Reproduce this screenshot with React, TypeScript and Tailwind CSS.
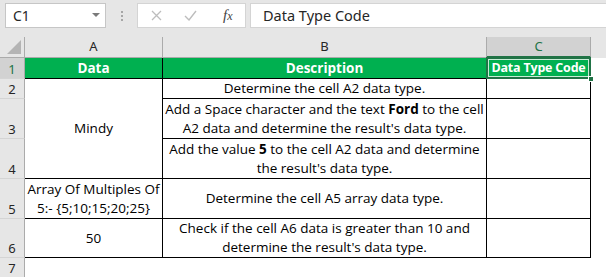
import React from "react";

const cellFont = { fontFamily: '"Open Sans", "Noto Sans", sans-serif' };

function RowHead({ n, sel }: { n: number; sel?: boolean }) {
  return (
    <div
      className={
        "flex items-end justify-center pb-[1px] border-r border-b border-r-[#ababab] border-b-[#d4d4d4] text-[13px] leading-[16px] " +
        (sel ? "bg-[#d2d2d2] text-[#217346] border-r-[#217346]" : "bg-[#e6e6e6] text-[#262626]")
      }
    >
      {n}
    </div>
  );
}

export default function App() {
  return (
    <div
      className="w-[606px] h-[277px] overflow-hidden bg-[#e6e6e6] text-black"
      style={{ fontFamily: '"Noto Sans", "Open Sans", sans-serif' }}
    >
      {/* formula bar */}
      <div className="h-[37px] flex items-start pt-[3px]">
        <div className="ml-[5px] w-[101px] h-[25px] bg-white border border-[#c6c6c6] flex items-center justify-between pl-[7px] pr-[5px]">
          <span className="text-[14px] text-[#262626]">C1</span>
          <svg width="8" height="5" viewBox="0 0 8 5">
            <path d="M0 0 L8 0 L4 4 Z" fill="#7a7a7a" />
          </svg>
        </div>
        <div className="w-[31px] h-[25px] flex flex-col items-center justify-center gap-[2px]">
          <div className="w-[2px] h-[2px] bg-[#a6a6a6]" />
          <div className="w-[2px] h-[2px] bg-[#a6a6a6]" />
          <div className="w-[2px] h-[2px] bg-[#a6a6a6]" />
        </div>
        <div className="w-[109px] h-[25px] bg-white border border-[#d4d4d4] flex items-center">
          <svg className="ml-[13px]" width="11" height="11" viewBox="0 0 11 11">
            <path d="M1 1 L10 10 M10 1 L1 10" stroke="#bdbdbd" strokeWidth="1.3" />
          </svg>
          <svg className="ml-[22px]" width="13" height="11" viewBox="0 0 13 11">
            <path d="M1 6 L5 10 L12 1" stroke="#bdbdbd" strokeWidth="1.4" fill="none" />
          </svg>
          <span
            className="ml-[26px] text-[15px] italic text-[#444]"
            style={{ fontFamily: '"Liberation Serif", serif' }}
          >
            f<span className="text-[12px]">x</span>
          </span>
        </div>
        <div className="ml-[4px] flex-1 h-[25px] bg-white border border-[#d4d4d4] border-r-0 flex items-center pl-[12px]">
          <span className="text-[14.5px] text-[#262626]">Data Type Code</span>
        </div>
      </div>

      {/* sheet grid */}
      <div className="grid grid-cols-[25px_138px_324px_104px_15px] grid-rows-[21px_21px_20px_40px_40px_40px_39px_20px] bg-white text-[13.5px]">
        {/* header row */}
        <div className="relative bg-[#e6e6e6] border-r border-b border-[#ababab]">
          <svg className="absolute right-[3px] bottom-[3px]" width="14" height="14" viewBox="0 0 14 14">
            <path d="M14 0 L14 14 L0 14 Z" fill="#b4b4b4" />
          </svg>
        </div>
        <div className="bg-[#e6e6e6] border-r border-b border-[#ababab] flex items-center justify-center text-[13px] text-[#262626]">
          A
        </div>
        <div className="bg-[#e6e6e6] border-r border-b border-[#ababab] flex items-center justify-center text-[13px] text-[#262626]">
          B
        </div>
        <div className="bg-[#d2d2d2] border-r border-r-[#ababab] border-b-2 border-b-[#217346] flex items-center justify-center text-[13px] text-[#217346]">
          C
        </div>
        <div className="bg-[#e6e6e6]" />

        {/* row 1 */}
        <RowHead n={1} sel />
        <div
          className="bg-[#00b050] border-r border-b border-black flex items-center justify-center text-white font-bold"
          style={cellFont}
        >
          Data
        </div>
        <div
          className="bg-[#00b050] border-r border-b border-black flex items-center justify-center text-white font-bold"
          style={cellFont}
        >
          Description
        </div>
        <div
          className="relative bg-[#00b050] border-r border-b border-black flex items-center justify-center text-white font-bold text-[12.5px] tracking-[-0.2px]"
          style={cellFont}
        >
          <div className="absolute -left-[1px] -top-[1px] -right-[1px] -bottom-[1px] border-2 border-[#217346]">
            <div className="w-full h-full border border-[#c8ecd6]" />
          </div>
          <span className="relative whitespace-nowrap">Data Type Code</span>
          <div className="absolute -right-[4px] -bottom-[4px] w-[6px] h-[6px] bg-[#217346] border border-white" />
        </div>
        <div />

        {/* row 2 */}
        <RowHead n={2} />
        <div className="row-span-3 border-r border-b border-black flex items-center justify-center" style={cellFont}>
          Mindy
        </div>
        <div className="border-r border-b border-black flex items-center justify-center" style={cellFont}>
          Determine the cell A2 data type.
        </div>
        <div className="border-r border-b border-black" />
        <div />

        {/* row 3 */}
        <RowHead n={3} />
        <div
          className="border-r border-b border-black flex flex-col items-center justify-center leading-[19px] whitespace-nowrap"
          style={cellFont}
        >
          <span>
            Add a Space character and the text <b>Ford</b> to the cell
          </span>
          <span>A2 data and determine the result's data type.</span>
        </div>
        <div className="border-r border-b border-black" />
        <div />

        {/* row 4 */}
        <RowHead n={4} />
        <div
          className="border-r border-b border-black flex flex-col items-center justify-center leading-[19px] whitespace-nowrap"
          style={cellFont}
        >
          <span>
            Add the value <b>5</b> to the cell A2 data and determine
          </span>
          <span>the result's data type.</span>
        </div>
        <div className="border-r border-b border-black" />
        <div />

        {/* row 5 */}
        <RowHead n={5} />
        <div
          className="border-r border-b border-black flex flex-col items-center justify-center leading-[19px] whitespace-nowrap"
          style={cellFont}
        >
          <span>Array Of Multiples Of</span>
          <span>5:- {"{5;10;15;20;25}"}</span>
        </div>
        <div className="border-r border-b border-black flex items-center justify-center" style={cellFont}>
          Determine the cell A5 array data type.
        </div>
        <div className="border-r border-b border-black" />
        <div />

        {/* row 6 */}
        <RowHead n={6} />
        <div className="border-r border-b border-black flex items-center justify-center" style={cellFont}>
          50
        </div>
        <div
          className="border-r border-b border-black flex flex-col items-center justify-center leading-[19px] whitespace-nowrap"
          style={cellFont}
        >
          <span>Check if the cell A6 data is greater than 10 and</span>
          <span>determine the result's data type.</span>
        </div>
        <div className="border-r border-b border-black" />
        <div />

        {/* row 7 */}
        <RowHead n={7} />
        <div />
        <div />
        <div />
        <div />
      </div>
    </div>
  );
}
